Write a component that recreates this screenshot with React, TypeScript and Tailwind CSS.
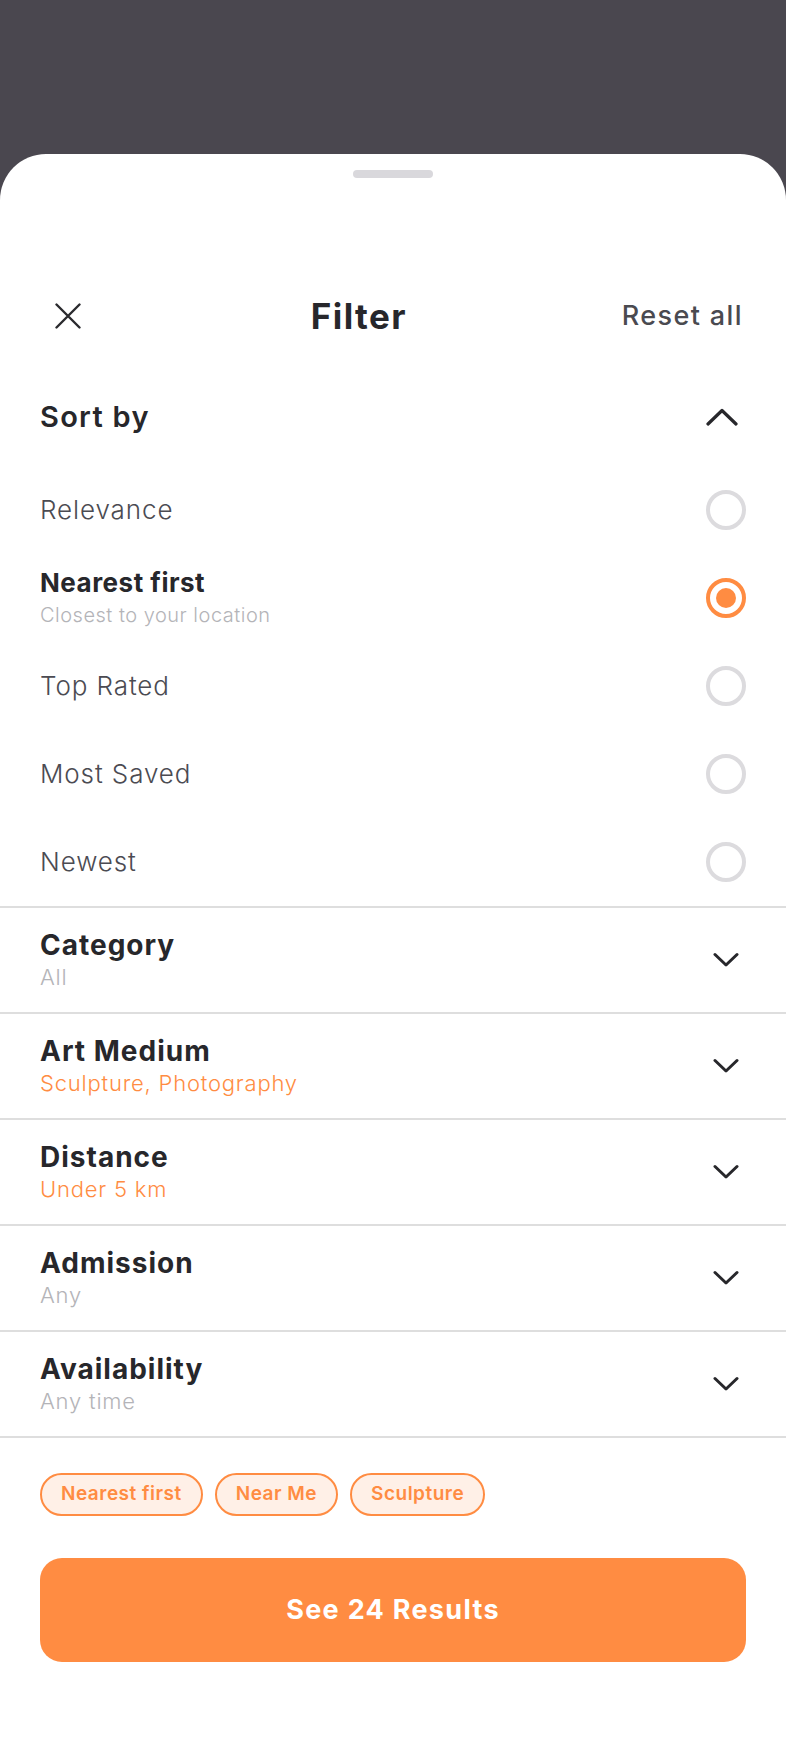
import React from "react";

const ORANGE = "#ff8c42";

interface SortOptionProps {
  label: string;
  sub?: string;
  selected?: boolean;
}

const Radio: React.FC<{ selected?: boolean }> = (props) => {
  if (props.selected) {
    return (
      <div className="w-[40px] h-[40px] rounded-full border-[4px] border-[#ff8c42] flex items-center justify-center">
        <div className="w-[20px] h-[20px] rounded-full bg-[#ff8c42]" />
      </div>
    );
  }
  return <div className="w-[40px] h-[40px] rounded-full border-[4px] border-[#dcdbde]" />;
};

const SortOption: React.FC<SortOptionProps> = (props) => {
  return (
    <div className="flex items-center justify-between h-[88px] px-[40px]">
      {props.sub ? (
        <div className="flex flex-col">
          <span className="text-[26px] leading-[32px] font-bold tracking-[0.5px] text-[#27272b]">{props.label}</span>
          <span className="mt-[2px] text-[20px] leading-[28px] font-light tracking-[0.5px] text-[#b4b4b8]">{props.sub}</span>
        </div>
      ) : (
        <span className="text-[26px] leading-[32px] font-light tracking-[0.9px] text-[#4b4b52]">{props.label}</span>
      )}
      <Radio selected={props.selected} />
    </div>
  );
};

interface FilterSectionProps {
  title: string;
  value: string;
  active?: boolean;
}

const ChevronDown = () => (
  <svg width="26" height="16" viewBox="0 0 26 16" fill="none">
    <path d="M2 2.5L13 13L24 2.5" stroke="#27272b" strokeWidth="3" strokeLinecap="round" strokeLinejoin="round" />
  </svg>
);

const FilterSection: React.FC<FilterSectionProps> = (props) => {
  return (
    <div className="flex items-center justify-between h-[106px] pl-[40px] pr-[47px] border-b-2 border-[#dedede]">
      <div className="flex flex-col">
        <span className="text-[28px] leading-[34px] font-bold tracking-[1px] text-[#27272b]">{props.title}</span>
        <span
          className={
            props.active
              ? "text-[22px] leading-[30px] font-light tracking-[0.8px] text-[#ff8c42]"
              : "text-[22px] leading-[30px] font-light tracking-[0.8px] text-[#b4b4b8]"
          }
        >
          {props.value}
        </span>
      </div>
      <ChevronDown />
    </div>
  );
};

const Chip: React.FC<{ label: string }> = (props) => (
  <span className="h-[43px] px-[19px] flex items-center rounded-full border-2 border-[#ff8c42] bg-[#fff0e7] text-[19px] font-semibold tracking-[0.5px] text-[#ff8c42]">
    {props.label}
  </span>
);

export default function App() {
  return (
    <div
      className="w-[786px] min-h-[1764px] bg-[#4a474f] pt-[154px] flex flex-col"
      style={{ fontFamily: "Inter, 'Noto Sans', sans-serif" }}
    >
      <div className="flex-1 bg-white rounded-t-[46px] flex flex-col">
        <div className="pt-[16px] flex justify-center">
          <div className="w-[80px] h-[8px] rounded-full bg-[#d9d8dc]" />
        </div>

        {/* header */}
        <div className="mt-[108px] h-[60px] flex items-center justify-between pl-[40px] pr-[43px]">
          <div className="w-[56px] flex justify-center">
            <svg width="26" height="26" viewBox="0 0 26 26" fill="none">
              <path d="M1.5 1.5L24.5 24.5M24.5 1.5L1.5 24.5" stroke="#2a2a2e" strokeWidth="2.4" strokeLinecap="round" />
            </svg>
          </div>
          <span className="text-[35px] font-bold tracking-[1.4px] text-[#27272b]">Filter</span>
          <span className="text-[27px] font-medium tracking-[1.4px] text-[#4a4a50]">Reset all</span>
        </div>

        {/* sort by */}
        <div className="mt-[27px] mb-[5px] h-[88px] flex items-center justify-between pl-[40px] pr-[48px]">
          <span className="text-[29px] font-semibold tracking-[1.3px] text-[#27272b]">Sort by</span>
          <svg width="32" height="18" viewBox="0 0 32 18" fill="none">
            <path d="M2 16L16 2.5L30 16" stroke="#27272b" strokeWidth="3.2" strokeLinecap="round" strokeLinejoin="round" />
          </svg>
        </div>
        <SortOption label="Relevance" />
        <SortOption label="Nearest first" sub="Closest to your location" selected />
        <SortOption label="Top Rated" />
        <SortOption label="Most Saved" />
        <SortOption label="Newest" />

        <div className="border-t-2 border-[#dedede]">
          <FilterSection title="Category" value="All" />
          <FilterSection title="Art Medium" value="Sculpture, Photography" active />
          <FilterSection title="Distance" value="Under 5 km" active />
          <FilterSection title="Admission" value="Any" />
          <FilterSection title="Availability" value="Any time" />
        </div>

        <div className="mt-[35px] px-[40px] flex gap-[12px]">
          <Chip label="Nearest first" />
          <Chip label="Near Me" />
          <Chip label="Sculpture" />
        </div>

        <div className="mt-[42px] px-[40px]">
          <button
            className="w-full h-[104px] rounded-[22px] text-white text-[27px] font-bold tracking-[1.3px]"
            style={{ backgroundColor: ORANGE }}
          >
            See 24 Results
          </button>
        </div>
      </div>
    </div>
  );
}
